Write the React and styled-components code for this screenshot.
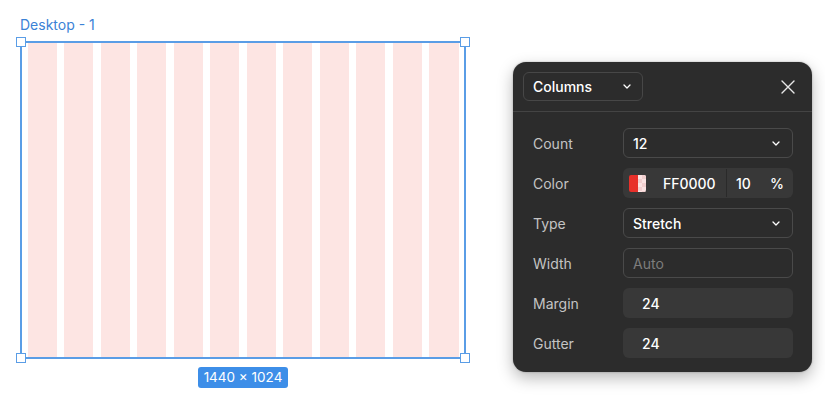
import React from "react";
import styled, { createGlobalStyle } from "styled-components";

const Global = createGlobalStyle`
  html, body { margin: 0; padding: 0; background: #ffffff; }
  body { font-family: Inter, "Noto Sans", sans-serif; -webkit-font-smoothing: antialiased; }
`;

const Page = styled.div`
  display: flex;
  align-items: flex-start;
  width: 825px;
  height: 398px;
  box-sizing: border-box;
  padding: 17px 0 0 20px;
  overflow: hidden;
`;

const Canvas = styled.div`
  display: flex;
  flex-direction: column;
  align-items: center;
  width: 446px;
`;

const FrameLabel = styled.div`
  align-self: flex-start;
  font-size: 14px;
  line-height: 16px;
  color: #3b82d6;
  margin-bottom: 8px;
`;

const Frame = styled.div`
  position: relative;
  width: 446px;
  height: 318px;
  box-sizing: border-box;
  border: 2px solid #5a9de6;
  padding: 0 5.5px;
  display: grid;
  grid-template-columns: repeat(12, 1fr);
  column-gap: 7.4px;
`;

const Col = styled.div`
  background: rgba(240, 80, 70, 0.15);
`;

const Handle = styled.div`
  position: absolute;
  width: 10px;
  height: 10px;
  box-sizing: border-box;
  background: #fff;
  border: 1.5px solid #5a9de6;
  ${(p) => (p.$top ? "top: -6px;" : "bottom: -6px;")}
  ${(p) => (p.$left ? "left: -6px;" : "right: -6px;")}
`;

const SizeBadge = styled.div`
  margin-top: 8px;
  background: #3d8ee8;
  color: #fff;
  font-size: 13.5px;
  line-height: 21px;
  padding: 0 6px;
  border-radius: 3px;
`;

const Panel = styled.div`
  margin-left: 47px;
  margin-top: 45px;
  width: 299px;
  height: 310px;
  box-sizing: border-box;
  background: #2c2c2c;
  border-radius: 13px;
  box-shadow: 0 6px 16px rgba(0, 0, 0, 0.28), 0 0 2px rgba(0, 0, 0, 0.3);
  display: flex;
  flex-direction: column;
  color: #fff;
`;

const Header = styled.div`
  display: flex;
  align-items: center;
  justify-content: space-between;
  height: 50px;
  box-sizing: border-box;
  padding: 0 16px 0 10px;
  border-bottom: 1px solid #444;
`;

const HeaderSelect = styled.div`
  display: flex;
  align-items: center;
  justify-content: space-between;
  width: 120px;
  height: 29px;
  box-sizing: border-box;
  border: 1px solid #474747;
  border-radius: 6px;
  padding: 0 11px 0 9px;
  font-size: 14px;
  font-weight: 500;
  color: #fff;
`;

const CloseBtn = styled.div`
  display: flex;
  align-items: center;
  justify-content: center;
  width: 16px;
  height: 16px;
`;

const Body = styled.div`
  display: flex;
  flex-direction: column;
  gap: 10px;
  padding: 16px 19px 0 20px;
`;

const Row = styled.div`
  display: grid;
  grid-template-columns: 90px 1fr;
  align-items: center;
  height: 30px;
`;

const Label = styled.div`
  font-size: 14px;
  color: #c4c4c4;
`;

const Field = styled.div`
  display: flex;
  align-items: center;
  height: 30px;
  box-sizing: border-box;
  border-radius: 6px;
  font-size: 14px;
  border: 1px solid ${(p) => (p.$filled ? "transparent" : "#4a4a4a")};
  background: ${(p) => (p.$filled ? "#383838" : "transparent")};
  color: ${(p) => (p.$placeholder ? "#7d7d7d" : "#fff")};
  font-weight: ${(p) => (p.$placeholder ? 400 : 500)};
  padding: ${(p) => (p.$filled ? "0 0 0 18px" : "0 12px 0 9px")};
  justify-content: space-between;
`;

const ColorField = styled(Field)`
  padding: 0;
`;

const ColorPart = styled.div`
  display: flex;
  align-items: center;
  height: 100%;
  gap: 17px;
  padding-left: 5px;
  width: 103px;
  box-sizing: border-box;
  border-right: 1px solid #2a2a2a;
`;

const Swatch = styled.div`
  width: 17px;
  height: 17px;
  border-radius: 2px;
  overflow: hidden;
  display: grid;
  grid-template-columns: 9px 8px;
`;

const SwatchSolid = styled.div`
  background: #e8302a;
`;

const SwatchAlpha = styled.div`
  background-color: #fbe3e3;
  background-image: linear-gradient(45deg, #f2cfcf 25%, transparent 25%, transparent 75%, #f2cfcf 75%),
    linear-gradient(45deg, #f2cfcf 25%, transparent 25%, transparent 75%, #f2cfcf 75%);
  background-size: 8px 8px;
  background-position: 0 0, 4px 4px;
`;

const OpacityPart = styled.div`
  flex: 1;
  display: flex;
  align-items: center;
  justify-content: space-between;
  padding: 0 8px 0 9px;
`;

const Chevron = () => (
  <svg width="8" height="5" viewBox="0 0 8 5" fill="none">
    <path d="M1 1l3 3 3-3" stroke="#fff" strokeWidth="1.3" strokeLinecap="round" strokeLinejoin="round" />
  </svg>
);

const XIcon = () => (
  <svg width="14" height="14" viewBox="0 0 14 14" fill="none">
    <path d="M1 1l12 12M13 1L1 13" stroke="#e8e8e8" strokeWidth="1.4" strokeLinecap="round" />
  </svg>
);

export default function App() {
  return (
    <>
      <Global />
      <Page>
        <Canvas>
          <FrameLabel>Desktop - 1</FrameLabel>
          <Frame>
            {Array.from({ length: 12 }).map((_, i) => (
              <Col key={i} />
            ))}
            <Handle $top $left />
            <Handle $top />
            <Handle $left />
            <Handle />
          </Frame>
          <SizeBadge>1440 × 1024</SizeBadge>
        </Canvas>
        <Panel>
          <Header>
            <HeaderSelect>
              Columns
              <Chevron />
            </HeaderSelect>
            <CloseBtn>
              <XIcon />
            </CloseBtn>
          </Header>
          <Body>
            <Row>
              <Label>Count</Label>
              <Field>
                12
                <Chevron />
              </Field>
            </Row>
            <Row>
              <Label>Color</Label>
              <ColorField $filled>
                <ColorPart>
                  <Swatch>
                    <SwatchSolid />
                    <SwatchAlpha />
                  </Swatch>
                  FF0000
                </ColorPart>
                <OpacityPart>
                  <span>10</span>
                  <span>%</span>
                </OpacityPart>
              </ColorField>
            </Row>
            <Row>
              <Label>Type</Label>
              <Field>
                Stretch
                <Chevron />
              </Field>
            </Row>
            <Row>
              <Label>Width</Label>
              <Field $placeholder>Auto</Field>
            </Row>
            <Row>
              <Label>Margin</Label>
              <Field $filled>24</Field>
            </Row>
            <Row>
              <Label>Gutter</Label>
              <Field $filled>24</Field>
            </Row>
          </Body>
        </Panel>
      </Page>
    </>
  );
}
